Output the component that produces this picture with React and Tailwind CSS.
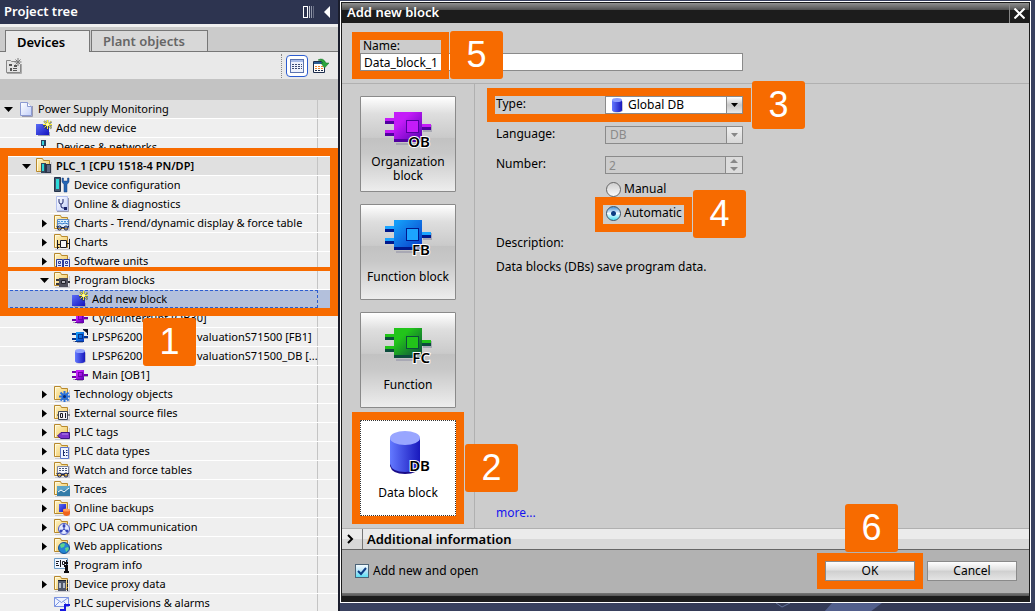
import React, { useState } from "react";

const INDENT = ["pl-0", "pl-[18px]", "pl-9", "pl-[54px]"];

const TREE = [
    { level: 0, icon: "project", label: "Power Supply Monitoring", open: true, head: true },
    { level: 1, icon: "add", label: "Add new device" },
    { level: 1, icon: "network", label: "Devices & networks" },
    { level: 1, icon: "plc", label: "PLC_1 [CPU 1518-4 PN/DP]", open: true, head: true, bold: true },
    { level: 2, icon: "config", label: "Device configuration" },
    { level: 2, icon: "diagnostics", label: "Online & diagnostics" },
    { level: 2, icon: "trend", label: "Charts - Trend/dynamic display & force table", open: false },
    { level: 2, icon: "charts", label: "Charts", open: false },
    { level: 2, icon: "units", label: "Software units", open: false },
    { level: 2, icon: "program", label: "Program blocks", open: true },
    { level: 3, icon: "add", label: "Add new block", selected: true },
    { level: 3, icon: "ob", label: "CyclicInterrupt [OB30]" },
    { level: 3, icon: "fb", label: "LPSP6200", rest: "valuationS71500 [FB1]" },
    { level: 3, icon: "db", label: "LPSP6200", rest: "valuationS71500_DB [..." },
    { level: 3, icon: "ob", label: "Main [OB1]" },
    { level: 2, icon: "technology", label: "Technology objects", open: false },
    { level: 2, icon: "external", label: "External source files", open: false },
    { level: 2, icon: "tags", label: "PLC tags", open: false },
    { level: 2, icon: "types", label: "PLC data types", open: false },
    { level: 2, icon: "watch", label: "Watch and force tables", open: false },
    { level: 2, icon: "traces", label: "Traces", open: false },
    { level: 2, icon: "backups", label: "Online backups", open: false },
    { level: 2, icon: "opc", label: "OPC UA communication", open: false },
    { level: 2, icon: "web", label: "Web applications", open: false },
    { level: 2, icon: "info", label: "Program info" },
    { level: 2, icon: "proxy", label: "Device proxy data", open: false },
    { level: 2, icon: "alarms", label: "PLC supervisions & alarms" },
];

function Gradients() {
    return (
        <svg className="absolute h-0 w-0" aria-hidden="true">
            <defs>
                <linearGradient id="folder" x1="0" y1="0" x2="1" y2="1">
                    <stop offset="0" stopColor="#fff6c8" />
                    <stop offset="1" stopColor="#f0c45c" />
                </linearGradient>
                <linearGradient id="page" x1="0" y1="0" x2="1" y2="1">
                    <stop offset="0" stopColor="#ffffff" />
                    <stop offset="1" stopColor="#c3d0fa" />
                </linearGradient>
                <linearGradient id="blue" x1="0" y1="0" x2="1" y2="1">
                    <stop offset="0" stopColor="#5a6cf5" />
                    <stop offset="1" stopColor="#1414c0" />
                </linearGradient>
                <linearGradient id="can" x1="0" y1="0" x2="1" y2="0">
                    <stop offset="0" stopColor="#6379ff" />
                    <stop offset="1" stopColor="#1818bd" />
                </linearGradient>
                <linearGradient id="purple" x1="0" y1="0" x2="1" y2="1">
                    <stop offset="0.3" stopColor="#c41cf8" />
                    <stop offset="1" stopColor="#5a00b4" />
                </linearGradient>
                <linearGradient id="azure" x1="0" y1="0" x2="1" y2="1">
                    <stop offset="0.1" stopColor="#149cf8" />
                    <stop offset="1" stopColor="#0a3cc8" />
                </linearGradient>
                <linearGradient id="green" x1="0" y1="0" x2="1" y2="1">
                    <stop offset="0.3" stopColor="#22c41a" />
                    <stop offset="1" stopColor="#0c4c3c" />
                </linearGradient>
            </defs>
        </svg>
    );
}

function Folder() {
    return (
        <g>
            <path d="M1 15h13v-1h1V4h1v12H1z" fill="#a9a9b4" opacity="0.5" />
            <path d="M0.5 13.5V0.5H6.5L7.5 2.5H13.5V13.5z" fill="url(#folder)" stroke="#b8892c" />
            <path d="M1.5 13V1.5H5.5" fill="none" stroke="#fff9dc" />
        </g>
    );
}

function Glasses() {
    return (
        <g fill="none" stroke="#16204e" strokeWidth="1">
            <circle cx="5.5" cy="13" r="2" />
            <circle cx="12" cy="13" r="2" />
            <path d="M7.5 12.5h2.5M3.5 12l-1-1M14 12l1-1" />
        </g>
    );
}

function Chip({ fill, dark }) {
    return (
        <g shapeRendering="crispEdges">
            <path d="M1 12h10v2H5v-1H1zM12 9h4v1h-4z" fill="#aaaab8" />
            <path d="M0 4h4v2H0zM0 9h4v2H0zM12 7h4v2h-4z" fill={dark} />
            <path d="M4 3h8v9H4z" fill={fill} />
            <path d="M3 12h9v1H3z" fill={dark} />
            <path d="M6.5 5.5h4v4h-4z" fill="none" stroke={dark} />
        </g>
    );
}

function Can() {
    return (
        <g>
            <path d="M4 14v1q5 2 10-1V4z" fill="#9c9cb4" opacity="0.6" />
            <path d="M3 3v10q0 2 5 2t5-2V3z" fill="url(#can)" />
            <ellipse cx="8" cy="3" rx="5" ry="2" fill="#8ea0ff" />
        </g>
    );
}

const ICONS = {
    project: (
        <g>
            <path d="M4 15.5h10.5V5" fill="none" stroke="#9a9aae" />
            <path d="M2.5 1.5h7l4 4v9h-11z" fill="url(#page)" stroke="#8c9ad2" />
            <path d="M9.5 1.5v4h4" fill="#fff" stroke="#8c9ad2" />
        </g>
    ),
    add: (
        <g>
            <path d="M2 15h11v-3h1v4H2z" fill="#a0a0b0" />
            <path d="M0 4h13v11H0z" fill="url(#blue)" />
            <path d="M11.5 0v10M7 5.5h9M8 1l7.5 7.5M15.5 1.500l-7 7" stroke="#2c3a18" strokeWidth="2" opacity="0.5" />
            <path d="M11.500 0v9M7 4.500h9M8.500 1.500l6 6M14.500 1.500l-6 6" stroke="#f8ee28" strokeWidth="1" />
            <circle cx="11.500" cy="4.500" r="1.500" fill="#fffcb0" />
        </g>
    ),
    network: (
        <g shapeRendering="crispEdges">
            <path d="M5 1h5v6H5z" fill="#284060" />
            <path d="M6 2h2v4H6z" fill="#38d0dc" />
            <path d="M7 7h1v3H7zM2 9h11v1H2zM2 9h1v3H2zM12 9h1v3h-1zM0 11h5v4H0zM10 11h5v4h-5z" fill="#222c48" />
        </g>
    ),
    plc: (
        <g>
            <Folder />
            <path d="M5 5h5v10H5z" fill="#34495e" />
            <path d="M6 6h2v7H6z" fill="#2ad4d4" />
            <path d="M9 6h6v9H9z" fill="#2c3448" />
            <path d="M11 7h3v7h-3z" fill="#5c6680" />
        </g>
    ),
    config: (
        <g>
            <path d="M0.500 0.500h6v14h-6z" fill="#44566c" stroke="#25344c" />
            <path d="M2 2h3v10H2z" fill="#2cdada" />
            <path d="M8 1v4l2 2.500V15h3V7.500L15 5V1h-1.500v3h-4V1z" fill="#2466b4" stroke="#143c7c" strokeWidth="0.5" />
        </g>
    ),
    diagnostics: (
        <g>
            <path d="M3 15.500h11.500V2" fill="none" stroke="#9a9aae" />
            <path d="M2.500 0.500h11v14h-11z" fill="url(#page)" stroke="#b4c0ee" />
            <path d="M5 3v3q0 2 2 2t2-2V3M7 8v2q0 2 2 2h1" fill="none" stroke="#1a2468" strokeWidth="1" />
            <path d="M10 11h3v3h-3z" fill="#1a2468" />
        </g>
    ),
    trend: (
        <g>
            <Folder />
            <path d="M3.500 4.500h11v8h-11z" fill="#dcecfc" stroke="#5c84c0" />
            <path d="M4 6.500h10" stroke="#4898dc" strokeDasharray="2 1" />
            <path d="M4 9l2-1 2 1 3-1 3 1" fill="none" stroke="#3078c8" />
            <Glasses />
        </g>
    ),
    charts: (
        <g>
            <Folder />
            <path d="M6 6h7v8H6z" fill="#f4f4f6" />
            <path d="M3.500 6v9M3.500 10.500h3M6.500 6.500h6v7h-6zM12.500 9.500h3M15.500 5v10M3 13.500h2" fill="none" stroke="#181820" />
        </g>
    ),
    units: (
        <g>
            <Folder />
            <path d="M2.500 6.500h6v8h-6zM9.500 6.500h6v8h-6z" fill="#e6ebfc" stroke="#2c3c9c" />
            <path d="M4.500 8.500h2v2h-2zM11.500 8.500h2v2h-2zM4 12.500h3M11 12.500h3" fill="none" stroke="#2c3c9c" />
        </g>
    ),
    program: (
        <g>
            <Folder />
            <path d="M2 7h4v2H2zM2 11h4v2H2zM13 9h3v2h-3z" fill="#34343c" />
            <path d="M5 6h9v9H5z" fill="#50505c" />
            <path d="M7.500 8.500h4v3h-4z" fill="#b4b4bc" stroke="#22222a" />
        </g>
    ),
    ob: <Chip fill="url(#purple)" dark="#6c00a8" />,
    fb: (
        <g>
            <Chip fill="url(#azure)" dark="#06348c" />
            <path d="M11 0h5v6h-1V4l-4-3z" fill="#0c1024" />
        </g>
    ),
    db: <Can />,
    technology: (
        <g>
            <Folder />
            <path d="M10.500 5v11M5 10.500h11M6.500 6.500l8 8M14.500 6.500l-8 8" stroke="#2870dc" strokeWidth="2" />
            <circle cx="10.500" cy="10.500" r="3" fill="#2870dc" />
            <circle cx="10.500" cy="10.500" r="1.500" fill="#0c2c70" />
        </g>
    ),
    external: (
        <g>
            <Folder />
            <path d="M3 10h13" stroke="#34343c" />
            <path d="M4.500 6.500h9v8h-9z" fill="#f2f2f6" stroke="#3c4454" />
            <path d="M6.500 8.500h2v4h-2zM11.500 8v5" fill="none" stroke="#181820" />
        </g>
    ),
    tags: (
        <g>
            <Folder />
            <path d="M3.500 12L7 8.500h8.500v6H7z" fill="#7c34cc" stroke="#3c1484" />
            <path d="M8 10h6" stroke="#b48cf0" />
        </g>
    ),
    types: (
        <g>
            <Folder />
            <path d="M6.500 4.500h8v11h-8z" fill="#eef2ff" stroke="#5c74c8" />
            <path d="M9.500 7v6M9 7.500h1M10 9.500h1M10 12.500h1M12 7.500h1.500M12 9.500h1.500M12 12.500h1.500" stroke="#1c2c6c" fill="none" />
        </g>
    ),
    watch: (
        <g>
            <Folder />
            <path d="M3.500 4.500h11v7h-11z" fill="#f6f8ff" stroke="#7c84a0" />
            <path d="M5 6.500h9M5 8.500h9" stroke="#485878" strokeDasharray="2 1" />
            <Glasses />
        </g>
    ),
    traces: (
        <g>
            <Folder />
            <path d="M3 5h13v10H3z" fill="#347ca8" />
            <path d="M3 5h13v3L3 10z" fill="#5ca4c8" />
            <path d="M4 11l3-2 3 2 5-4" fill="none" stroke="#fff" />
        </g>
    ),
    backups: (
        <g>
            <Folder />
            <path d="M5 4h7v8H5z" fill="url(#blue)" />
            <path d="M9 10h7v4q-1 2-3.500 2T9 14z" fill="#f0641c" />
            <ellipse cx="12.500" cy="10" rx="3.500" ry="1.500" fill="#ff9c5c" />
        </g>
    ),
    opc: (
        <g>
            <Folder />
            <circle cx="10" cy="10" r="5.500" fill="#e2e8ff" stroke="#4858c8" />
            <path d="M10 10V5M10 10l4 3M10 10l-4 3" stroke="#3444b8" fill="none" />
            <circle cx="10" cy="7" r="1.500" fill="#3444b8" />
            <circle cx="7" cy="12" r="1.500" fill="#3444b8" />
            <circle cx="13" cy="12" r="1.500" fill="#3444b8" />
        </g>
    ),
    web: (
        <g>
            <Folder />
            <circle cx="10" cy="10" r="5.500" fill="#2484d4" stroke="#145090" />
            <path d="M6 7q3-3 5-1l-1 3-3 1zM11 10l3-1 1 2-3 3z" fill="#5cd48c" />
        </g>
    ),
    info: (
        <g>
            <path d="M0.500 1.500h13v10h-13z" fill="#f0f6ff" stroke="#6c9cc8" />
            <path d="M2 4.500h3M2 6.500h2M2 8.500h3M6.500 3v7M8.500 4.500h2v3h-2zM12.500 3v5" stroke="#181820" fill="none" />
            <path d="M11 5h3v2h-3zM10 8h4v6h1v2h-5v-2h1v-4h-1z" fill="#0c0c10" />
        </g>
    ),
    proxy: (
        <g>
            <Folder />
            <path d="M4 5h8v10H4z" fill="#50586c" />
            <path d="M5 7h2v5H5zM9 7h2v5H9z" fill="#b4bccc" />
            <path d="M13.500 4v12" stroke="#20242c" strokeDasharray="3 1" />
            <path d="M4 4h8v1H4z" fill="#181c28" />
        </g>
    ),
    alarms: (
        <g>
            <path d="M0.500 2.500h14v9h-14z" fill="#eef3ff" stroke="#7c94e0" />
            <path d="M0.500 2.500l7 5 7-5M0.500 11.500l5-5M14.500 11.500l-5-5" fill="none" stroke="#7c94e0" />
            <path d="M6 15h5v-5h5" fill="none" stroke="#1818e0" strokeWidth="2" />
        </g>
    ),
};

function Icon({ name }) {
    return (
        <svg width="16" height="16" viewBox="0 0 16 16" className="shrink-0" aria-hidden="true">
            {ICONS[name]}
        </svg>
    );
}

function Marker({ number, className }) {
    return (
        <span className={`absolute z-20 flex h-12 w-[53px] items-center justify-center rounded-[3px] bg-[#f76b00] font-['Liberation_Sans',Arial,sans-serif] text-[36px] leading-none text-white ${className}`}>
            {number}
        </span>
    );
}

function Frame({ className = "-inset-2" }) {
    return <span className={`pointer-events-none absolute z-10 border-8 border-[#f76b00] ${className}`} />;
}

function TreeRow({ item }) {
    let tone = "bg-[#efefef]";
    if (item.head) tone = "bg-[#e0e0e0]";
    if (item.selected) tone = "bg-[#b3c0dc]";

    return (
        <li className={`relative flex h-[19px] border-b border-white ${tone}`}>
            <div className={`flex min-w-0 flex-1 items-center border-r border-[#c4c4c4] ${INDENT[item.level]}`}>
                <span className="flex w-[18px] shrink-0 items-center pl-1">
                    {item.open !== undefined && (
                        <button type="button" aria-label={`Toggle ${item.label}`}>
                            <svg width="9" height="9" viewBox="0 0 9 9" aria-hidden="true">
                                <path d={item.open ? "M0 2h9L4.500 7z" : "M2 0.500v8L7 4.500z"} fill="#000" />
                            </svg>
                        </button>
                    )}
                </span>
                <Icon name={item.icon} />
                <span className={`ml-1 whitespace-nowrap ${item.rest ? "w-[105px] shrink-0" : ""} ${item.bold ? "font-semibold" : ""}`}>{item.label}</span>
                {item.rest && <span className="whitespace-nowrap">{item.rest}</span>}
            </div>
            <div className="w-5 shrink-0" />
            {item.selected && <span className="absolute inset-y-0 right-5 left-0 border border-dashed border-[#2c5cd0]" />}
        </li>
    );
}

function ProjectTree() {
    return (
        <aside className="flex w-[338px] shrink-0 flex-col overflow-hidden bg-[#efefef]">
            <header className="flex h-6 shrink-0 items-center bg-[#2d3450] pr-2 pl-1">
                <h2 className="flex-1 text-[13px] font-semibold text-white">Project tree</h2>
                <button type="button" aria-label="Collapse columns" className="mr-[10px]">
                    <svg width="11" height="12" viewBox="0 0 11 12" shapeRendering="crispEdges">
                        <path d="M0.500 0.500h4v11h-4z" fill="none" stroke="#fff" />
                        <path d="M6.500 0v12" stroke="#c8ccd8" />
                        <path d="M8.500 0v12" stroke="#9096a8" />
                        <path d="M10.500 0v12" stroke="#686e84" />
                    </svg>
                </button>
                <button type="button" aria-label="Hide project tree">
                    <svg width="6" height="12" viewBox="0 0 6 12">
                        <path d="M6 0v12L0 6z" fill="#fff" />
                    </svg>
                </button>
            </header>

            <div className="mt-[3px] flex h-[25px] shrink-0 items-end border-b border-[#777] bg-[#cbcbcb] pl-[5px]">
                <button type="button" className="-mb-px h-[22px] w-[85px] border border-b-0 border-[#777] bg-[#e9e9e9] pl-[11px] text-left text-[13px] leading-5 font-semibold">
                    Devices
                </button>
                <button type="button" className="ml-px h-[21px] w-[117px] border border-b-0 border-[#777] bg-[#d8d8d8] pl-[11px] text-left text-[13px] leading-5 font-semibold text-[#666]">
                    Plant objects
                </button>
            </div>

            <div className="flex h-[27px] shrink-0 items-center bg-[#e9e9e9] pr-[9px] pl-1.5">
                <button type="button" aria-label="Create new group">
                    <svg width="16" height="16" viewBox="0 0 16 16">
                        <path d="M1 15.500h14.500V6" stroke="#aaa" fill="none" />
                        <path d="M0.500 2.500h4l1 1h5M0.500 2.500v12h14v-8" fill="#e4e4e4" stroke="#888" />
                        <path d="M3 6h3v2H3zM8 7h3v2H8zM4 10h2v3H4zM7 10h4v1H7zM7 12h4v1H7z" fill="#555" />
                        <path d="M12 0v8M8.500 4h7M9.500 1.500l5 5M14.500 1.500l-5 5" stroke="#777" />
                    </svg>
                </button>
                <span className="ml-auto h-6 border-l border-dotted border-[#888]" />
                <button type="button" aria-label="Details view" className="ml-1 flex h-[22px] w-[22px] items-center justify-center rounded-sm border border-[#2c5cd0] bg-white">
                    <svg width="14" height="14" viewBox="0 0 14 14" shapeRendering="crispEdges">
                        <path d="M0.500 0.500h13v13h-13z" fill="#eef2fc" stroke="#5c74b0" />
                        <path d="M1 1h12v2H1z" fill="#a8bce8" />
                        <path d="M2 5.500h10M2 7.500h10M2 9.500h10" stroke="#3c4c74" strokeDasharray="2 1" />
                    </svg>
                </button>
                <button type="button" aria-label="Open overview" className="ml-[5px]">
                    <svg width="16" height="16" viewBox="0 0 16 16">
                        <path d="M0.500 3.500h11v11h-11z" fill="#fff" stroke="#1c2c4c" />
                        <path d="M1 4h10v2H1z" fill="#2c5c94" />
                        <path d="M2 8.500h8M2 10.500h8" stroke="#f0842c" strokeDasharray="2 1" />
                        <path d="M2 12.500h8" stroke="#1c2c4c" strokeDasharray="2 1" />
                        <path d="M5 2q5-3 8 3h3l-4.500 5L8 5h2Q8 2 5 2z" fill="#2ca43c" stroke="#106c20" strokeWidth="0.5" />
                    </svg>
                </button>
            </div>

            <div className="h-[21px] shrink-0 bg-[#c3c3c3]" />

            <div className="relative">
                <ul className="text-[11px] leading-[18px]">
                    {TREE.map((item, i) => (
                        <TreeRow key={i} item={item} />
                    ))}
                </ul>
                <Frame className="inset-x-0 top-12 h-[168px]" />
                <span className="absolute inset-x-2 top-[167px] z-10 h-1 bg-[#f76b00]" />
                <Marker number="1" className="top-[218px] left-[143px]" />
            </div>
        </aside>
    );
}

function BlockArt({ code, fill, light, dark }) {
    return (
        <svg width="48" height="48" viewBox="0 -4 48 48" aria-hidden="true">
            {code === "DB" ? (
                <g>
                    <path d="M6 3v28q2 8 15 8t15-8V3z" fill="#1a0c88" />
                    <path d="M6 3v26q2 8 15 8t15-8V3z" fill="url(#can)" />
                    <ellipse cx="21" cy="3" rx="15" ry="7" fill="#99a6ff" />
                </g>
            ) : (
                <g shapeRendering="crispEdges">
                    <path d="M12 32h20v2H12zM39 14h9v7h-9z" fill="#a8a8b4" />
                    <path d="M1 7h9v3H1zM1 19h9v3H1zM38 13h9v3h-9z" fill={light} />
                    <path d="M1 10h9v3H1zM1 22h9v3H1zM38 16h9v3h-9zM10 28h28v3H10z" fill={dark} />
                    <path d="M10 1h28v27H10z" fill={fill} />
                    <path d="M22.500 9.500h12v12h-12z" fill={light} stroke={dark} />
                </g>
            )}
            <text
                x="46"
                y="36"
                textAnchor="end"
                fontSize="15"
                fontWeight="600"
                fill="#000"
                stroke="#fff"
                strokeWidth="2"
                paintOrder="stroke"
            >
                {code}
            </text>
        </svg>
    );
}

const BLOCKS = [
    { code: "OB", label: "Organization block", fill: "url(#purple)", light: "#c41cf8", dark: "#5200a0" },
    { code: "FB", label: "Function block", fill: "url(#azure)", light: "#1ca4ff", dark: "#00188c" },
    { code: "FC", label: "Function", fill: "url(#green)", light: "#22c41a", dark: "#0c4c3c" },
    { code: "DB", label: "Data block" },
];

function BlockTile({ block, active, onSelect }) {
    const look = active
        ? "border-dotted border-[#333] bg-white"
        : "border-[#8a8a8a] bg-[linear-gradient(#fff,#dedede_18%,#cacaca_43%,#c2c2c2_44%,#c8c8c8_60%,#ededed)]";

    return (
        <button
            type="button"
            aria-pressed={active}
            onClick={onSelect}
            className={`flex h-24 w-24 flex-col items-center rounded-[1px] border pt-2.5 ${look}`}
        >
            <BlockArt {...block} />
            <span className="flex h-7 items-center px-1 leading-[14px]">{block.label}</span>
        </button>
    );
}

function DropArrow({ muted }) {
    return (
        <span className={`pointer-events-none absolute inset-y-0 right-0 flex w-[17px] items-center justify-center border border-[#8a8a8a] bg-linear-to-b ${muted ? "from-[#f0f0f0] to-[#d8d8d8]" : "from-white via-[#c8c8c8] to-[#e8e8e8]"}`}>
            <svg width="7" height="4" viewBox="0 0 7 4" aria-hidden="true">
                <path d="M0 0h7L3.500 4z" fill={muted ? "#888" : "#000"} />
            </svg>
        </span>
    );
}

function Radio({ label, checked, onChange }) {
    return (
        <label className="relative flex items-center">
            <input
                type="radio"
                name="numbering"
                checked={checked}
                onChange={onChange}
                className="mr-[3px] h-[15px] w-[15px] appearance-none rounded-full border border-[#666] bg-[linear-gradient(#d0d0d0,#fafafa)] checked:border-[#3c5468] checked:bg-[radial-gradient(circle,#0c3c84_0_2px,transparent_3px),linear-gradient(#4c94d8,#f4fcff_50%,#4ce0f4)]"
            />
            {label}
        </label>
    );
}

function PushButton({ children }) {
    return (
        <button type="button" className="h-5 w-[90px] border border-[#8a8a8a] bg-[linear-gradient(#fff,#e0e0e0_45%,#cfcfcf_50%,#e4e4e4)]">
            {children}
        </button>
    );
}

function AddBlockDialog() {
    const [type, setType] = useState("DB");
    const [mode, setMode] = useState("auto");

    return (
        <section className="mt-px mr-1 flex min-w-0 flex-1 flex-col border border-white text-xs">
            <header className="flex h-[21px] shrink-0 border border-b-0 border-[#1c1c1c] bg-[linear-gradient(#909090,#505050_7px,#1c1c1c_7px)]">
                <h1 className="flex-1 pl-[5px] text-[13px] leading-[18px] font-semibold text-white">Add new block</h1>
                <button type="button" aria-label="Close" className="flex w-5 items-center justify-center border-l border-[#888]">
                    <svg width="11" height="11" viewBox="0 0 11 11">
                        <path d="M0.500 0.500l10 10M10.500 0.500l-10 10" stroke="#fff" strokeWidth="2" />
                    </svg>
                </button>
            </header>

            <div className="flex flex-1 flex-col border-x border-b-6 border-[#1c1c1c] bg-[#cccccc]">
                <div className="h-[61px] border-b border-[#b0b0b0] px-[18px] pt-4">
                    <div className="relative w-[383px]">
                        <label htmlFor="name" className="block pl-[3px] leading-[14px]">Name:</label>
                        <input id="name" defaultValue="Data_block_1" className="block h-[18px] w-full border border-[#8a8a8a] bg-white px-[3px] outline-none" />
                        <Frame className="-top-[7px] -left-2 h-[47px] w-[97px]" />
                        <Marker number="5" className="-top-2 left-[90px]" />
                    </div>
                </div>

                <div className="flex flex-1">
                    <div className="flex w-[133px] shrink-0 flex-col gap-3 border-r border-[#b0b0b0] px-[18px] py-3">
                        {BLOCKS.map((block) => (
                            <div key={block.code} className="relative">
                                <BlockTile block={block} active={type === block.code} onSelect={() => setType(block.code)} />
                                {block.code === "DB" && (
                                    <>
                                        <Frame />
                                        <Marker number="2" className="top-6 left-[105px]" />
                                    </>
                                )}
                            </div>
                        ))}
                    </div>

                    <div className="flex flex-1 flex-col pt-3 pb-[7px] pl-[21px] leading-4">
                        <div className="flex w-[247px] flex-col gap-3">
                            <div className="relative flex">
                                <label htmlFor="type" className="w-[109px]">Type:</label>
                                <div className="relative h-[18px] flex-1">
                                    <select id="type" className="h-full w-full appearance-none border border-[#8a8a8a] bg-white pl-[22px]">
                                        <option>Global DB</option>
                                    </select>
                                    <span className="pointer-events-none absolute top-px left-1">
                                        <Icon name="db" />
                                    </span>
                                    <DropArrow />
                                </div>
                                <Frame className="-inset-y-2 -right-2 -left-[9px]" />
                                <Marker number="3" className="-top-[15px] left-64" />
                            </div>
                            <div className="flex">
                                <label htmlFor="language" className="w-[109px]">Language:</label>
                                <div className="relative h-[18px] flex-1">
                                    <select id="language" disabled className="h-full w-full appearance-none border border-[#8a8a8a] bg-[#cccccc] pl-1 text-[#8a8a8a] opacity-100">
                                        <option>DB</option>
                                    </select>
                                    <DropArrow muted />
                                </div>
                            </div>
                            <div className="flex">
                                <label htmlFor="number" className="w-[109px]">Number:</label>
                                <div className="relative h-[18px] flex-1">
                                    <input id="number" disabled defaultValue="2" className="h-full w-full border border-[#8a8a8a] px-[3px] text-[#8a8a8a]" />
                                    <span className="absolute inset-y-0 right-0 flex w-[18px] flex-col items-center justify-center border border-[#8a8a8a] bg-[#dcdcdc]">
                                        <svg width="8" height="12" viewBox="0 0 8 12" aria-hidden="true">
                                            <path d="M0 4h8L4 0zM0 8h8L4 12z" fill="#888" />
                                        </svg>
                                    </span>
                                </div>
                            </div>
                        </div>

                        <div className="mt-[7px] ml-[110px] flex flex-col items-start gap-2">
                            <Radio label="Manual" checked={mode === "manual"} onChange={() => setMode("manual")} />
                            <div className="relative">
                                <Radio label="Automatic" checked={mode === "auto"} onChange={() => setMode("auto")} />
                                <Frame className="-top-2 -left-[11px] h-[35px] w-[97px]" />
                                <Marker number="4" className="-top-[15px] left-[87px]" />
                            </div>
                        </div>

                        <p className="mt-[14px]">Description:</p>
                        <p className="mt-2">Data blocks (DBs) save program data.</p>
                        <a href="#more" className="mt-auto self-start text-[#1414f0]">more...</a>
                    </div>
                </div>

                <div className="flex h-[22px] shrink-0 items-stretch border-t border-b border-t-[#b0b0b0] border-b-[#666] bg-[linear-gradient(#ebebeb_50%,#d8d8d8_50%)]">
                    <button type="button" aria-label="Expand additional information" className="flex w-[21px] items-center border-r border-[#777] pl-[5px]">
                        <svg width="7" height="10" viewBox="0 0 7 10">
                            <path d="M1 1l4 4-4 4" fill="none" stroke="#000" strokeWidth="2" />
                        </svg>
                    </button>
                    <h2 className="pl-1 text-[13px] leading-5 font-semibold">Additional information</h2>
                </div>

                <footer className="flex h-[46px] shrink-0 items-start bg-[linear-gradient(#b2b2b2_43px,#777_43px,#555)] pt-[11px] pr-3 pl-[13px]">
                    <label className="relative flex h-5 items-center">
                        <input
                            type="checkbox"
                            defaultChecked
                            className="peer mr-1 h-[14px] w-[14px] appearance-none border border-[#4c6478] bg-[linear-gradient(#f4fcff,#b8e4f8_50%,#5ce0f4)]"
                        />
                        <svg width="10" height="9" viewBox="0 0 10 9" className="pointer-events-none absolute left-0.5 hidden peer-checked:block" aria-hidden="true">
                            <path d="M1 4l3 3 5-6" fill="none" stroke="#0c3c84" strokeWidth="2" />
                        </svg>
                        Add new and open
                    </label>
                    <div className="ml-auto flex gap-3">
                        <div className="relative">
                            <PushButton>OK</PushButton>
                            <Frame />
                            <Marker number="6" className="bottom-[29px] left-5" />
                        </div>
                        <PushButton>Cancel</PushButton>
                    </div>
                </footer>
            </div>
        </section>
    );
}

export default function App() {
    return (
        <div className="flex h-screen overflow-hidden bg-[#1a1d2c] font-['Noto_Sans',sans-serif] text-black">
            <Gradients />
            <ProjectTree />
            <main className="ml-0.5 flex min-w-0 flex-1 flex-col bg-[#39415f]">
                <AddBlockDialog />
                <svg className="h-[9px] w-full shrink-0" viewBox="0 0 695 9" preserveAspectRatio="none" aria-hidden="true">
                    <path d="M300 0h395v9H300z" fill="#343a56" />
                    <path d="M492 0h50l-12 9h-46z" fill="#525f8c" />
                    <path d="M436 0l6 4 8-4" fill="none" stroke="#66759c" />
                </svg>
            </main>
        </div>
    );
}
